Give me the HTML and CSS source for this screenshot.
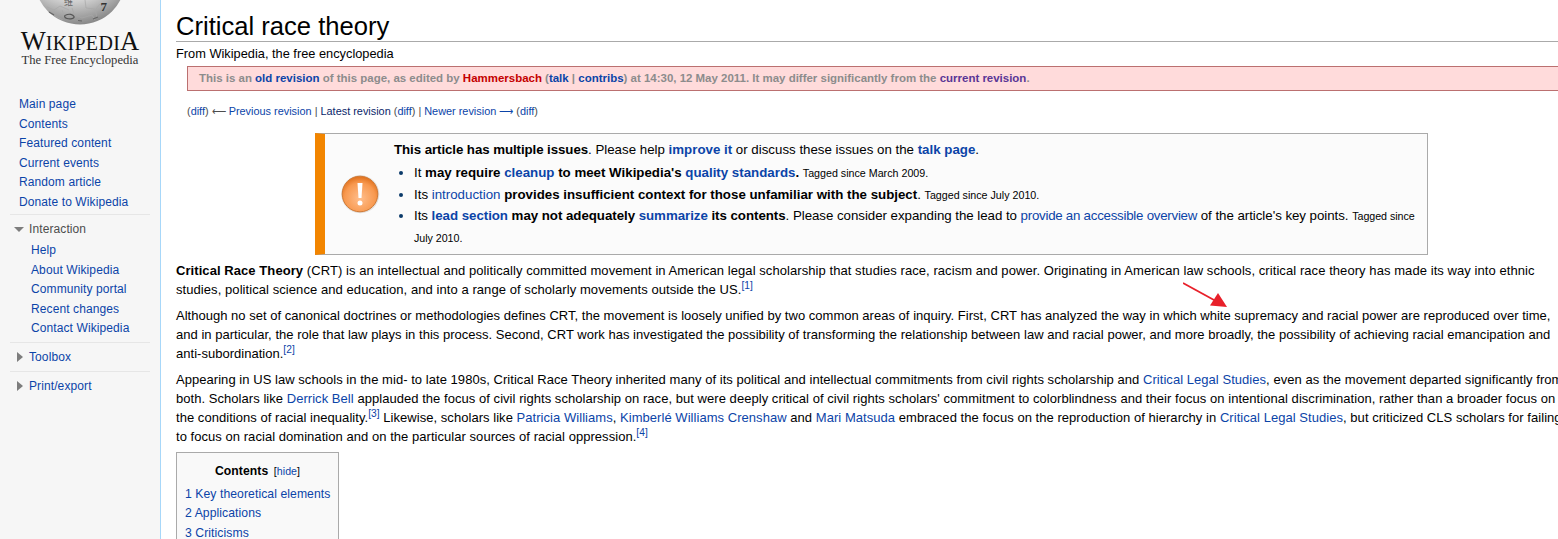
FILE: index.html
```html
<!DOCTYPE html>
<html lang="en">
<head>
<meta charset="utf-8">
<title>Critical race theory - Wikipedia</title>
<link rel="stylesheet" href="styles.css">
</head>
<body>
<div class="page">
  <aside class="sidebar">
    <div class="logo">
      <svg class="globe" width="100" height="25" viewBox="0 0 100 25">
        <defs>
          <radialGradient id="g" cx="42%" cy="20%" r="80%">
            <stop offset="0" stop-color="#f6f6f6"/><stop offset="0.62" stop-color="#dedede"/><stop offset="1" stop-color="#8a8a8a"/>
          </radialGradient>
        </defs>
        <circle cx="50" cy="-21" r="45.500" fill="url(#g)"/>
        <path d="M17 7l7 3 6-4 9 4M32 10l2 5 10-1 8 4 10-3 3 5M55 0l1 8 9 1 2 8M44 14l-2-6M25 16l8 4M66 9l4-5" fill="none" stroke="#a8a8a8" stroke-width=".7"/>
        <path d="M36 15c3-1.500 7-.5 8 1.500s-4 3-7 2-3-3-1-3.500z" fill="none" stroke="#555" stroke-width="1.200"/>
        <path d="M19 12l5 3M48 20.500l4 .5M63 19l5-2" stroke="#666" stroke-width="1.200"/>
        <text class="globe-seven" x="70.500" y="10.500">7</text>
        <text class="globe-glyph" x="34" y="5">维</text>
      </svg>
      <div class="wordmark">W<span>IKIPEDI</span>A</div>
      <div class="tagline">The Free Encyclopedia</div>
    </div>
    <ul class="nav main-nav">
      <li><a href="#">Main page</a></li>
      <li><a href="#">Contents</a></li>
      <li><a href="#">Featured content</a></li>
      <li><a href="#">Current events</a></li>
      <li><a href="#">Random article</a></li>
      <li><a href="#">Donate to Wikipedia</a></li>
    </ul>
    <section class="portal">
      <h3 class="open"><i class="tri-down"></i>Interaction</h3>
      <ul class="nav sub-nav">
        <li><a href="#">Help</a></li>
        <li><a href="#">About Wikipedia</a></li>
        <li><a href="#">Community portal</a></li>
        <li><a href="#">Recent changes</a></li>
        <li><a href="#">Contact Wikipedia</a></li>
      </ul>
    </section>
    <section class="portal">
      <h3><i class="tri-right"></i><a href="#">Toolbox</a></h3>
    </section>
    <section class="portal">
      <h3><i class="tri-right"></i><a href="#">Print/export</a></h3>
    </section>
  </aside>
  <main class="content">
    <h1 class="title">Critical race theory</h1>
    <div class="sitesub">From Wikipedia, the free encyclopedia</div>
    <div class="revwarn">This is an <a href="#">old revision</a> of this page, as edited by <a class="red" href="#">Hammersbach</a> (<a href="#">talk</a> | <a href="#">contribs</a>) at 14:30, 12 May 2011. It may differ significantly from the <a class="visited" href="#">current revision</a>.</div>
    <div class="revnav">(<a href="#">diff</a>) <span class="arr">⟵</span> <a href="#">Previous revision</a> | <a class="dark" href="#">Latest revision</a> (<a href="#">diff</a>) | <a href="#">Newer revision <span class="arr">⟶</span></a> (<a href="#">diff</a>)</div>
    <div class="ambox">
      <div class="ambox-icon">
        <svg width="40" height="40" viewBox="0 0 40 40">
          <defs>
            <radialGradient id="o" cx="50%" cy="62%" r="60%">
              <stop offset="0" stop-color="#ffbe8c"/><stop offset="0.72" stop-color="#f8994f"/><stop offset="1" stop-color="#e2731f"/>
            </radialGradient>
          </defs>
          <circle cx="20.300" cy="20.300" r="19" fill="#c9c2ba" opacity=".5"/>
          <circle cx="20" cy="20" r="17.800" fill="url(#o)" stroke="#d07a36" stroke-width="1"/>
          <path d="M17.500 9h5l-1 15h-3z" fill="#fff"/>
          <circle cx="20" cy="29" r="2.500" fill="#fff"/>
        </svg>
      </div>
      <div class="ambox-text">
        <div class="ambox-head"><b class="tight">This article has multiple issues</b>. Please help <a class="strong" href="#">improve it</a> or discuss these issues on the <a class="strong" href="#">talk page</a>.</div>
        <ul class="issues">
          <li>It <b>may require <a href="#">cleanup</a> to meet Wikipedia's <a href="#">quality standards</a>.</b> <small>Tagged since March 2009.</small></li>
          <li>Its <a href="#">introduction</a> <b>provides insufficient context for those unfamiliar with the subject</b>. <small>Tagged since July 2010.</small></li>
          <li class="squeezed">Its <b><a href="#">lead section</a> may not adequately <a href="#">summarize</a> its contents</b>. Please consider expanding the lead to <a class="narrow" href="#">provide an accessible overview</a> of the article's key points. <small>Tagged since July 2010.</small></li>
        </ul>
      </div>
    </div>
    <p class="para-a"><b>Critical Race Theory</b> (CRT) is an intellectual and politically committed movement in American legal scholarship that studies race, racism and power. Originating in American law schools, critical race theory has made its way into ethnic studies, political science and education, and into a range of scholarly movements outside the US.<sup><a href="#">[1]</a></sup></p>
    <p class="para-b">Although no set of canonical doctrines or methodologies defines CRT, the movement is loosely unified by two common areas of inquiry. First, CRT has analyzed the way in which white supremacy and racial power are reproduced over time, and in particular, the role that law plays in this process. Second, CRT work has investigated the possibility of transforming the relationship between law and racial power, and more broadly, the possibility of achieving racial emancipation and anti-subordination.<sup><a href="#">[2]</a></sup></p>
    <p class="para-c">Appearing in US law schools in the mid- to late 1980s, Critical Race Theory inherited many of its political and intellectual commitments from civil rights scholarship and <a href="#">Critical Legal Studies</a>, even as the movement departed significantly from both. Scholars like <a href="#">Derrick Bell</a> applauded the focus of civil rights scholarship on race, but were deeply critical of civil rights scholars' commitment to colorblindness and their focus on intentional discrimination, rather than a broader focus on the conditions of racial inequality.<sup><a href="#">[3]</a></sup> Likewise, scholars like <a href="#">Patricia Williams</a>, <a href="#">Kimberlé Williams Crenshaw</a> and <a href="#">Mari Matsuda</a> embraced the focus on the reproduction of hierarchy in <a href="#">Critical Legal Studies</a>, but criticized CLS scholars for failing to focus on racial domination and on the particular sources of racial oppression.<sup><a href="#">[4]</a></sup></p>
    <div class="toc">
      <div class="toc-title"><b>Contents</b> <span>[<a href="#">hide</a>]</span></div>
      <ul>
        <li><a href="#">1 Key theoretical elements</a></li>
        <li><a href="#">2 Applications</a></li>
        <li><a href="#">3 Criticisms</a></li>
      </ul>
    </div>
    <svg class="arrow" width="50" height="30" viewBox="0 0 50 30">
      <path d="M0 2L31 19" stroke="#e8202a" stroke-width="1.800" fill="none"/>
      <path d="M44 26L27 24.500L35 12z" fill="#e8202a"/>
    </svg>
  </main>
</div>
</body>
</html>
```
FILE: styles.css
```css
html, body {
  margin: 0;
  height: 539px;
  overflow: hidden;
  background: #fff;
}
body {
  font-family: "Liberation Sans", Arial, sans-serif;
  color: #000;
}
a {
  color: #0b44a8;
  text-decoration: none;
}
ul {
  list-style: none;
  margin: 0;
  padding: 0;
}

.page {
  display: flex;
  width: 1600px;
  height: 539px;
  overflow: hidden;
}

/* Sidebar */
.sidebar {
  flex: none;
  width: 160px;
  height: 539px;
  background: #f6f6f6;
  border-right: 1px solid #a7d7f9;
}
.logo {
  text-align: center;
  color: #111;
  font-family: "Liberation Serif", "Times New Roman", serif;
}
.globe {
  display: block;
  margin: 0 auto;
}
.globe-seven {
  font-family: "Liberation Serif", serif;
  font-size: 13px;
  font-weight: bold;
  fill: #333;
}
.globe-glyph {
  font-family: "Noto Sans CJK SC", sans-serif;
  font-size: 9px;
  fill: #666;
}
.wordmark {
  font-size: 26.500px;
  line-height: 24px;
  margin-top: 4px;
  white-space: nowrap;
}
.wordmark span {
  font-size: 20px;
  letter-spacing: .3px;
}
.tagline {
  font-size: 12.600px;
  line-height: 14px;
  margin-top: -2px;
  color: #333;
}
.nav li {
  font-size: 12px;
  letter-spacing: .1px;
  line-height: 19.500px;
  white-space: nowrap;
}
.main-nav {
  padding: 28px 0 0 19px;
}
.portal {
  margin-left: 10px;
  margin-right: 10px;
}
.portal h3 {
  margin: 0;
  font-weight: normal;
  font-size: 12px;
  letter-spacing: .1px;
  line-height: 14px;
  color: #4d4d4d;
  display: flex;
  align-items: center;
  padding: 7px 0 7px 9px;
  border-top: 1px solid #e6e6e6;
}
.portal h3.open {
  padding-bottom: 4px;
}
.main-nav + .portal {
  margin-top: 2px;
}
.portal h3 i {
  display: block;
  flex: none;
}
.tri-down {
  width: 0;
  height: 0;
  margin: 0 5px 0 -5px;
  border-left: 5px solid transparent;
  border-right: 5px solid transparent;
  border-top: 5px solid #7d7d7d;
}
.tri-right {
  width: 0;
  height: 0;
  margin-right: 6px;
  margin-left: -2px;
  border-top: 5px solid transparent;
  border-bottom: 5px solid transparent;
  border-left: 6px solid #7d7d7d;
}
.sub-nav {
  padding: 1px 0 3px 21px;
}

/* Content */
.content {
  flex: none;
  width: 1396px;
  padding-left: 15px;
  position: relative;
  font-size: 13px;
  line-height: 19px;
}
.title {
  margin: 0;
  font-weight: normal;
  font-size: 25.600px;
  line-height: 30px;
  padding-top: 11px;
  border-bottom: 1px solid #aaa;
  width: 1385px;
}
.sitesub {
  font-size: 12.800px;
  line-height: 16px;
  margin-top: 4px;
}
.revwarn {
  margin: 4px 0 0 11px;
  padding: 3px 11px;
  height: 17px;
  background: #ffdbdb;
  border: 1px solid #bb7070;
  font-size: 11.470px;
  line-height: 17px;
  font-weight: bold;
  color: #8c8c8c;
  white-space: nowrap;
}
.revwarn .red { color: #c40000; }
.revwarn .visited { color: #5a3696; }
.revnav {
  margin: 12px 0 0 11px;
  font-size: 10.900px;
  line-height: 17px;
  color: #4d4d4d;
}
.revnav .arr {
  font-size: 9.500px;
}
.revnav .dark { color: #0a1f6a; }
.ambox {
  display: flex;
  width: 1102px;
  height: 120px;
  margin: 13px 0 0 139px;
  background: #fbfbfb;
  border: 1px solid #aaa;
  border-left: 10px solid #f28500;
}
.ambox-icon {
  flex: none;
  width: 69px;
  display: flex;
  align-items: center;
  justify-content: center;
  box-sizing: border-box;
}
.ambox-text {
  flex: 1;
  font-size: 13.300px;
  line-height: 22px;
  padding-top: 5px;
}
.ambox-head {
  line-height: 22px;
}
.tight {
  letter-spacing: -.08px;
}
.strong {
  font-weight: bold;
}
.narrow {
  letter-spacing: -.25px;
}
.issues {
  list-style: disc;
  margin: 1px 0 0 20px;
}
.issues li {
  line-height: 21.700px;
}
.issues li.squeezed {
  letter-spacing: -.04px;
}
.issues li::marker {
  color: #0b3a6a;
}
.issues small {
  font-size: 10.700px;
  line-height: 1;
}
.content p {
  margin: 7px 0;
}
.ambox + p {
  margin-top: 5.500px;
}
.para-a {
  letter-spacing: .07px;
}
.para-b {
  letter-spacing: .02px;
}
.content .para-c {
  letter-spacing: .045px;
  margin: 6px 0;
}
sup {
  font-size: 10.200px;
  line-height: 0;
}
.toc {
  box-sizing: border-box;
  width: 163px;
  height: 110px;
  margin-top: 6px;
  padding: 8px 8px;
  background: #f9f9f9;
  border: 1px solid #aaa;
  font-size: 12.200px;
  letter-spacing: .07px;
  line-height: 19.500px;
  white-space: nowrap;
}
.toc-title {
  text-align: center;
  line-height: 20px;
  margin-bottom: 4px;
}
.toc-title span {
  font-size: 10.600px;
  margin-left: 2px;
}
.arrow {
  position: absolute;
  left: 1022px;
  top: 281px;
}
```
